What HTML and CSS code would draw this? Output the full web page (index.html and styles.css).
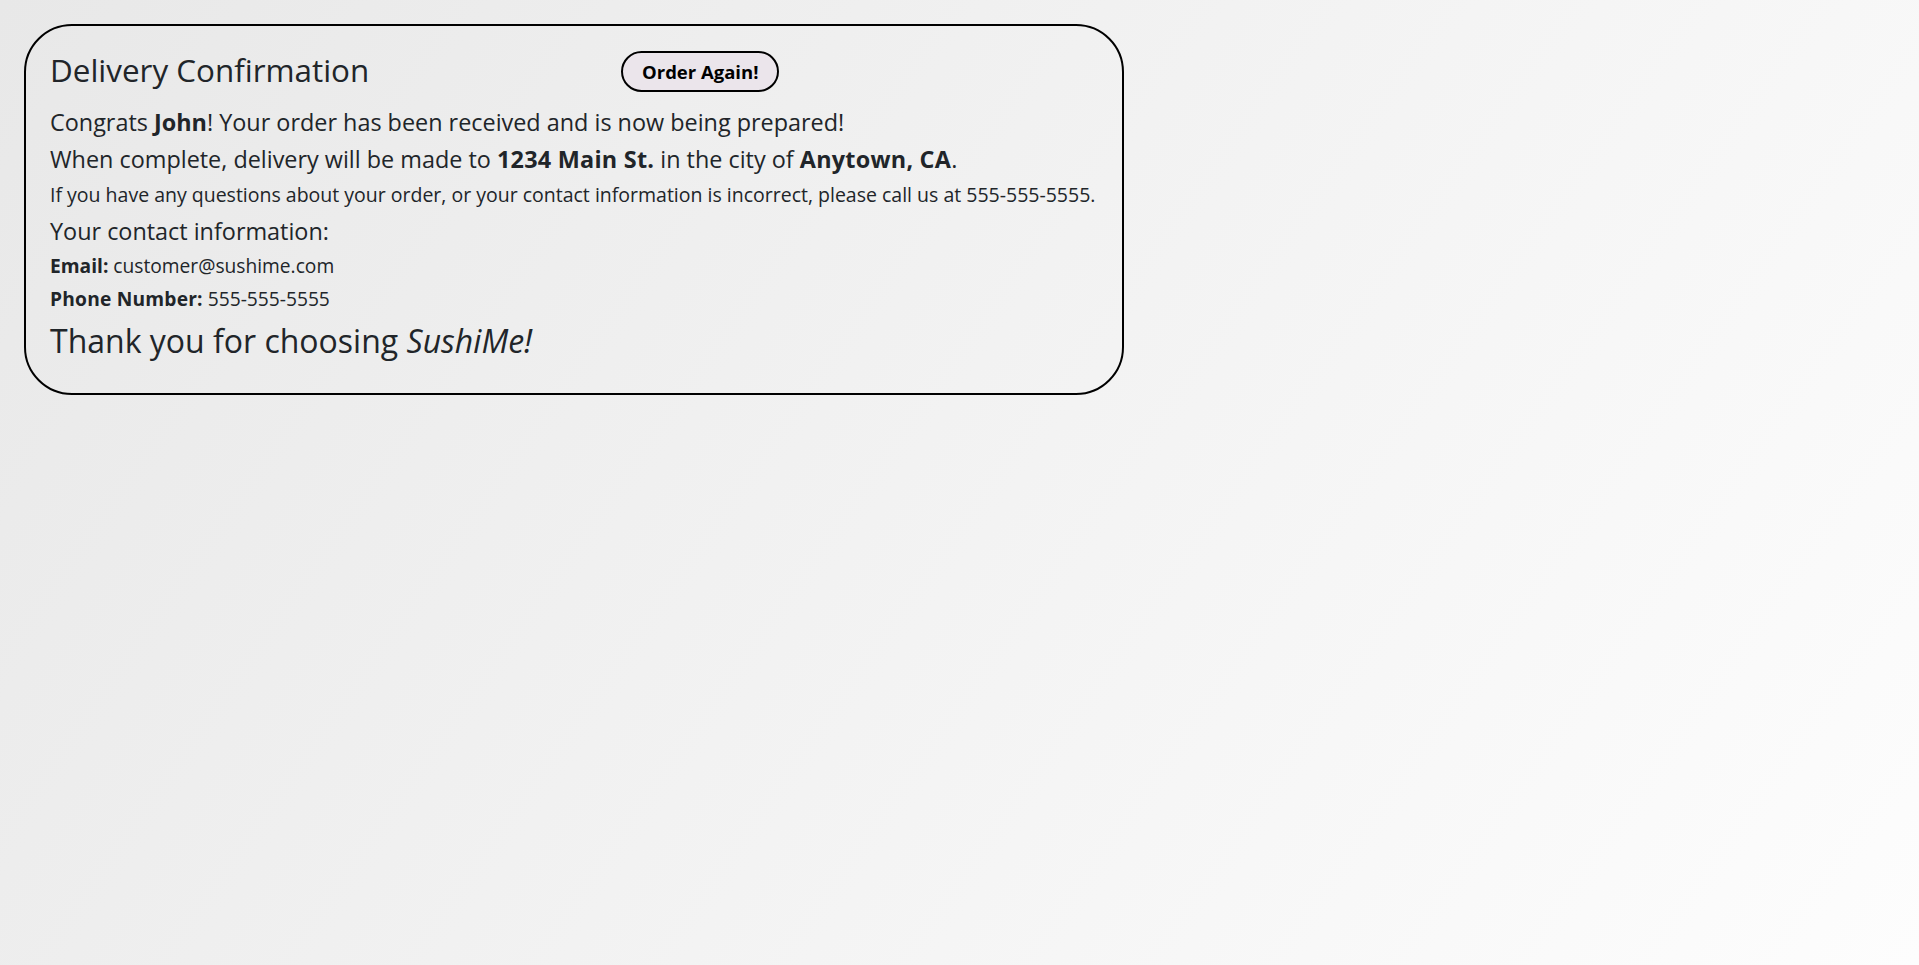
FILE: index.html
```html
<!DOCTYPE html>
<html lang="en">
<head>
<meta charset="utf-8">
<title>Delivery Confirmation</title>
<link rel="stylesheet" href="styles.css">
</head>
<body>
<main class="page">
  <section class="card">
    <div class="card-head">
      <h2 class="title">Delivery Confirmation</h2>
      <button class="btn-again" type="button">Order Again!</button>
    </div>
    <h4 class="lead m1">Congrats <b>John</b>! Your order has been received and is now being prepared!</h4>
    <h4 class="lead m2">When complete, delivery will be made to <b>1234 Main St.</b> in the city of <b>Anytown, CA</b>.</h4>
    <h5 class="note">If you have any questions about your order, or your contact information is incorrect, please call us at 555-555-5555.</h5>
    <h4 class="lead m3">Your contact information:</h4>
    <p class="info i1"><b>Email:</b> customer@sushime.com</p>
    <p class="info i2"><b>Phone Number:</b> 555-555-5555</p>
    <h2 class="thanks">Thank you for choosing <i>SushiMe!</i></h2>
  </section>
</main>
</body>
</html>
```
FILE: styles.css
```css
html {
  min-height: 100%;
  background: linear-gradient(125deg, #e8e8e8 0%, #fdfdfd 100%);
}
body {
  margin: 0;
  font-family: "Open Sans", "Noto Sans", sans-serif;
  color: #212529;
}
.page {
  padding: 24px;
}
.card {
  box-sizing: border-box;
  width: 1100px;
  border: 2px solid #000;
  border-radius: 48px;
  padding: 24px;
}
.card-head {
  display: flex;
  align-items: flex-start;
  margin-bottom: 15.5px;
}
.title {
  width: 571px;
  margin: 1px 0 0;
  font-size: 31.4px;
  font-weight: 400;
  line-height: 1.2;
}
.btn-again {
  margin-top: 1px;
  height: 41px;
  padding: 0 19px;
  border: 2px solid #000;
  border-radius: 21px;
  background: #ebe5eb;
  color: #000;
  font-family: "Open Sans", sans-serif;
  font-size: 18.5px;
  font-weight: 700;
}
.lead {
  margin: 0 0 9px;
  font-size: 23.4px;
  font-weight: 400;
  line-height: 1.2;
}
.m2 { margin-bottom: 10px; }
.m2 b { letter-spacing: 0.25px; }
.m3 { margin-bottom: 7px; }
.note {
  margin: 0 0 11px;
  font-size: 19.5px;
  font-weight: 400;
  line-height: 1.2;
}
.info {
  margin: 0;
  font-size: 19.2px;
  line-height: 1.5;
}
.i1 { margin-bottom: 4.5px; }
.i2 { margin-bottom: 7.5px; }
.i2 b { letter-spacing: 0.2px; }
.thanks {
  margin: 0 0 9px;
  font-size: 32px;
  font-weight: 400;
  line-height: 1.2;
}
b { font-weight: 700; }
```
